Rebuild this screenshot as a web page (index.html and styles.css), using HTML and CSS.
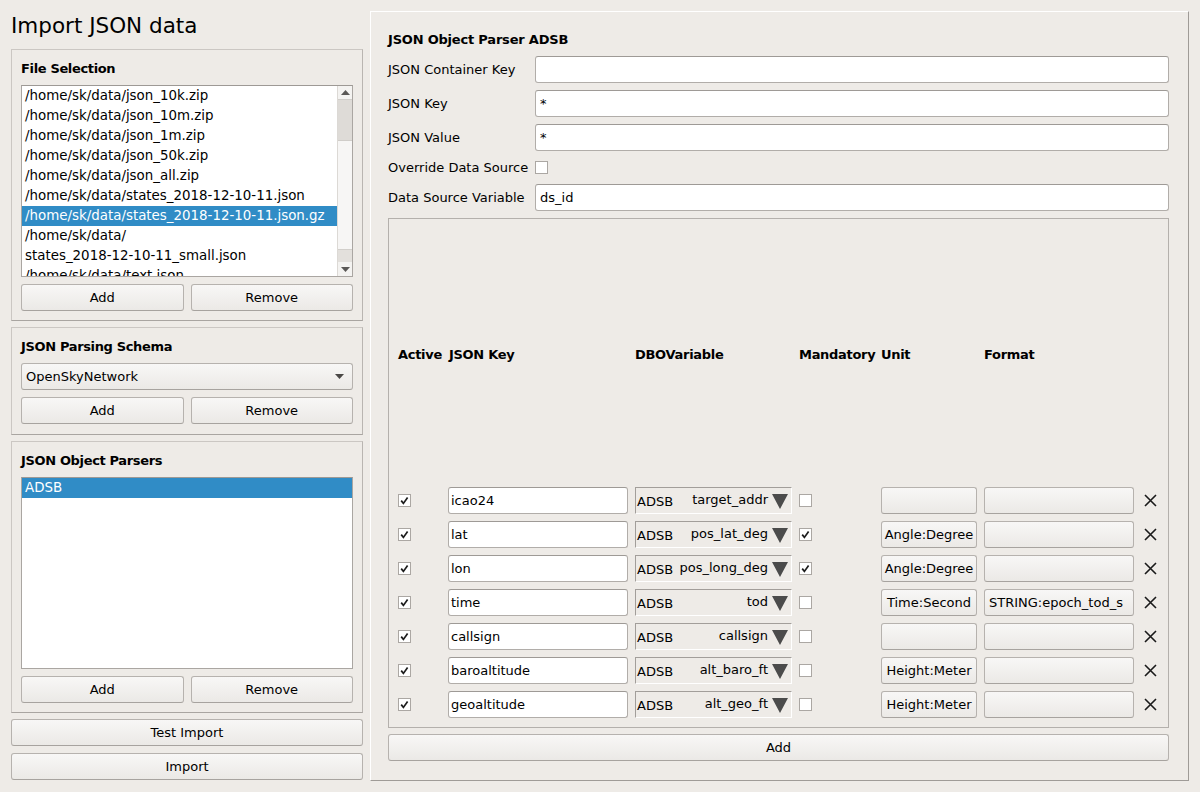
FILE: index.html
```html
<!DOCTYPE html>
<html>
<head>
<meta charset="utf-8">
<link rel="stylesheet" href="styles.css">
</head>
<body>
<div class="app">
  <div class="left">
    <div class="title">Import JSON data</div>

    <div class="group">
      <div class="gtitle">File Selection</div>
      <div class="list filelist">
        <div class="items">
          <div class="item">/home/sk/data/json_10k.zip</div>
          <div class="item">/home/sk/data/json_10m.zip</div>
          <div class="item">/home/sk/data/json_1m.zip</div>
          <div class="item">/home/sk/data/json_50k.zip</div>
          <div class="item">/home/sk/data/json_all.zip</div>
          <div class="item">/home/sk/data/states_2018-12-10-11.json</div>
          <div class="item sel">/home/sk/data/states_2018-12-10-11.json.gz</div>
          <div class="item">/home/sk/data/</div>
          <div class="item">states_2018-12-10-11_small.json</div>
          <div class="item">/home/sk/data/text.json</div>
        </div>
        <div class="vscroll">
          <div class="sbtn up"><svg width="9" height="5" viewBox="0 0 9 5"><path d="M0 5 L4.5 0 L9 5 Z" fill="#5a5856"/></svg></div>
          <div class="thumb"></div>
          <div class="track"></div>
          <div class="sband"></div>
          <div class="sbtn down"><svg width="9" height="5" viewBox="0 0 9 5"><path d="M0 0 L4.5 5 L9 0 Z" fill="#5a5856"/></svg></div>
        </div>
      </div>
      <div class="btnrow"><button class="btn">Add</button><button class="btn">Remove</button></div>
    </div>

    <div class="group g2">
      <div class="gtitle">JSON Parsing Schema</div>
      <div class="combo">
        <span>OpenSkyNetwork</span>
        <svg width="9" height="5" viewBox="0 0 9 5"><path d="M0 0 L4.5 5 L9 0 Z" fill="#4a4846"/></svg>
      </div>
      <div class="btnrow"><button class="btn">Add</button><button class="btn">Remove</button></div>
    </div>

    <div class="group grow">
      <div class="gtitle">JSON Object Parsers</div>
      <div class="list parserlist">
        <div class="items">
          <div class="item sel">ADSB</div>
        </div>
      </div>
      <div class="btnrow"><button class="btn">Add</button><button class="btn">Remove</button></div>
    </div>

    <button class="btn wide">Test Import</button>
    <button class="btn wide">Import</button>
  </div>

  <div class="right">
    <div class="ptitle">JSON Object Parser ADSB</div>
    <div class="form">
      <div class="lbl">JSON Container Key</div>
      <div class="input"></div>
      <div class="lbl">JSON Key</div>
      <div class="input">*</div>
      <div class="lbl">JSON Value</div>
      <div class="input">*</div>
      <div class="lbl">Override Data Source</div>
      <div class="cbcell"><span class="cb"></span></div>
      <div class="lbl">Data Source Variable</div>
      <div class="input">ds_id</div>
    </div>

    <div class="tframe">
      <div class="tgrid">
        <div class="th">Active</div>
        <div class="th">JSON Key</div>
        <div class="th">DBOVariable</div>
        <div class="th">Mandatory</div>
        <div class="th">Unit</div>
        <div class="th">Format</div>
        <div class="th"></div>

        <div class="cbcell"><span class="cb on"><svg width="11" height="11" viewBox="0 0 11 11"><path d="M2.2 5.6 L4.4 8.4 L8.6 2.4" fill="none" stroke="#1c1c1c" stroke-width="1.7"/></svg></span></div>
        <div class="input small">icao24</div>
        <div class="dbo"><span class="ds">ADSB</span><span class="var">target_addr</span><svg class="tri" width="16" height="15" viewBox="0 0 16 15"><path d="M0 0 L16 0 L8 15 Z" fill="#4b4b4b"/></svg></div>
        <div class="cbcell"><span class="cb"></span></div>
        <button class="btn unit"></button>
        <button class="btn fmt"></button>
        <div class="xcell"><svg width="13" height="13" viewBox="0 0 13 13"><path d="M1 1 L12 12 M12 1 L1 12" stroke="#1a1a1a" stroke-width="1.6"/></svg></div>

        <div class="cbcell"><span class="cb on"><svg width="11" height="11" viewBox="0 0 11 11"><path d="M2.2 5.6 L4.4 8.4 L8.6 2.4" fill="none" stroke="#1c1c1c" stroke-width="1.7"/></svg></span></div>
        <div class="input small">lat</div>
        <div class="dbo"><span class="ds">ADSB</span><span class="var">pos_lat_deg</span><svg class="tri" width="16" height="15" viewBox="0 0 16 15"><path d="M0 0 L16 0 L8 15 Z" fill="#4b4b4b"/></svg></div>
        <div class="cbcell"><span class="cb on"><svg width="11" height="11" viewBox="0 0 11 11"><path d="M2.2 5.6 L4.4 8.4 L8.6 2.4" fill="none" stroke="#1c1c1c" stroke-width="1.7"/></svg></span></div>
        <button class="btn unit">Angle:Degree</button>
        <button class="btn fmt"></button>
        <div class="xcell"><svg width="13" height="13" viewBox="0 0 13 13"><path d="M1 1 L12 12 M12 1 L1 12" stroke="#1a1a1a" stroke-width="1.6"/></svg></div>

        <div class="cbcell"><span class="cb on"><svg width="11" height="11" viewBox="0 0 11 11"><path d="M2.2 5.6 L4.4 8.4 L8.6 2.4" fill="none" stroke="#1c1c1c" stroke-width="1.7"/></svg></span></div>
        <div class="input small">lon</div>
        <div class="dbo"><span class="ds">ADSB</span><span class="var">pos_long_deg</span><svg class="tri" width="16" height="15" viewBox="0 0 16 15"><path d="M0 0 L16 0 L8 15 Z" fill="#4b4b4b"/></svg></div>
        <div class="cbcell"><span class="cb on"><svg width="11" height="11" viewBox="0 0 11 11"><path d="M2.2 5.6 L4.4 8.4 L8.6 2.4" fill="none" stroke="#1c1c1c" stroke-width="1.7"/></svg></span></div>
        <button class="btn unit">Angle:Degree</button>
        <button class="btn fmt"></button>
        <div class="xcell"><svg width="13" height="13" viewBox="0 0 13 13"><path d="M1 1 L12 12 M12 1 L1 12" stroke="#1a1a1a" stroke-width="1.6"/></svg></div>

        <div class="cbcell"><span class="cb on"><svg width="11" height="11" viewBox="0 0 11 11"><path d="M2.2 5.6 L4.4 8.4 L8.6 2.4" fill="none" stroke="#1c1c1c" stroke-width="1.7"/></svg></span></div>
        <div class="input small">time</div>
        <div class="dbo"><span class="ds">ADSB</span><span class="var">tod</span><svg class="tri" width="16" height="15" viewBox="0 0 16 15"><path d="M0 0 L16 0 L8 15 Z" fill="#4b4b4b"/></svg></div>
        <div class="cbcell"><span class="cb"></span></div>
        <button class="btn unit">Time:Second</button>
        <button class="btn fmt">STRING:epoch_tod_s</button>
        <div class="xcell"><svg width="13" height="13" viewBox="0 0 13 13"><path d="M1 1 L12 12 M12 1 L1 12" stroke="#1a1a1a" stroke-width="1.6"/></svg></div>

        <div class="cbcell"><span class="cb on"><svg width="11" height="11" viewBox="0 0 11 11"><path d="M2.2 5.6 L4.4 8.4 L8.6 2.4" fill="none" stroke="#1c1c1c" stroke-width="1.7"/></svg></span></div>
        <div class="input small">callsign</div>
        <div class="dbo"><span class="ds">ADSB</span><span class="var">callsign</span><svg class="tri" width="16" height="15" viewBox="0 0 16 15"><path d="M0 0 L16 0 L8 15 Z" fill="#4b4b4b"/></svg></div>
        <div class="cbcell"><span class="cb"></span></div>
        <button class="btn unit"></button>
        <button class="btn fmt"></button>
        <div class="xcell"><svg width="13" height="13" viewBox="0 0 13 13"><path d="M1 1 L12 12 M12 1 L1 12" stroke="#1a1a1a" stroke-width="1.6"/></svg></div>

        <div class="cbcell"><span class="cb on"><svg width="11" height="11" viewBox="0 0 11 11"><path d="M2.2 5.6 L4.4 8.4 L8.6 2.4" fill="none" stroke="#1c1c1c" stroke-width="1.7"/></svg></span></div>
        <div class="input small">baroaltitude</div>
        <div class="dbo"><span class="ds">ADSB</span><span class="var">alt_baro_ft</span><svg class="tri" width="16" height="15" viewBox="0 0 16 15"><path d="M0 0 L16 0 L8 15 Z" fill="#4b4b4b"/></svg></div>
        <div class="cbcell"><span class="cb"></span></div>
        <button class="btn unit">Height:Meter</button>
        <button class="btn fmt"></button>
        <div class="xcell"><svg width="13" height="13" viewBox="0 0 13 13"><path d="M1 1 L12 12 M12 1 L1 12" stroke="#1a1a1a" stroke-width="1.6"/></svg></div>

        <div class="cbcell"><span class="cb on"><svg width="11" height="11" viewBox="0 0 11 11"><path d="M2.2 5.6 L4.4 8.4 L8.6 2.4" fill="none" stroke="#1c1c1c" stroke-width="1.7"/></svg></span></div>
        <div class="input small">geoaltitude</div>
        <div class="dbo"><span class="ds">ADSB</span><span class="var">alt_geo_ft</span><svg class="tri" width="16" height="15" viewBox="0 0 16 15"><path d="M0 0 L16 0 L8 15 Z" fill="#4b4b4b"/></svg></div>
        <div class="cbcell"><span class="cb"></span></div>
        <button class="btn unit">Height:Meter</button>
        <button class="btn fmt"></button>
        <div class="xcell"><svg width="13" height="13" viewBox="0 0 13 13"><path d="M1 1 L12 12 M12 1 L1 12" stroke="#1a1a1a" stroke-width="1.6"/></svg></div>
      </div>
    </div>

    <button class="btn addrow">Add</button>
  </div>
</div>
</body>
</html>
```

FILE: styles.css
```css
* { box-sizing: border-box; }

html, body {
  margin: 0;
  padding: 0;
  width: 1200px;
  height: 792px;
  overflow: hidden;
  background: #eeebe7;
  font-family: "DejaVu Sans", "Liberation Sans", sans-serif;
  font-size: 13px;
  color: #000;
}

.app {
  display: flex;
  gap: 7px;
  padding: 11px 11px 11px 11px;
  height: 792px;
}

/* ---------- left column ---------- */
.left {
  width: 352px;
  flex: none;
  display: flex;
  flex-direction: column;
  padding-bottom: 1px;
}

.title {
  height: 38px;
  line-height: 30px;
  font-size: 21.5px;
}

.group {
  border: 1px solid #cbc7c3;
  border-bottom-color: #a9a5a1;
  border-right-color: #b9b5b1;
  padding: 9px 9px 9px 9px;
  display: flex;
  flex-direction: column;
  margin-bottom: 6px;
}

.group.g2 { padding-bottom: 10px; }

.group.grow { flex: 1; min-height: 0; }

.gtitle {
  height: 20px;
  line-height: 20px;
  font-weight: bold;
  letter-spacing: -0.35px;
  margin-bottom: 6px;
}

.list {
  background: #fff;
  border: 1px solid #aaa6a2;
  border-top-color: #9d9995;
  display: flex;
  overflow: hidden;
}

.filelist { height: 192px; }
.parserlist { flex: 1; min-height: 0; }

.items {
  flex: 1;
  overflow: hidden;
}

.item {
  height: 20px;
  line-height: 20px;
  padding-left: 3px;
  white-space: nowrap;
  font-size: 13.4px;
}

.item.sel {
  background: #308cc6;
  color: #fff;
}

.vscroll {
  width: 15px;
  flex: none;
  display: flex;
  flex-direction: column;
  border-left: 1px solid #dcd9d5;
  background: #f7f6f5;
}

.sbtn {
  height: 13px;
  display: flex;
  align-items: center;
  justify-content: center;
  background: #f4f3f1;
}

.sbtn.down { height: 14px; }

.thumb {
  height: 42px;
  background: #dedbd7;
  border-top: 1px solid #d0cdc9;
  border-bottom: 1px solid #d0cdc9;
}

.track { flex: 1; background: #f7f6f5; }

.sband {
  height: 13px;
  background: #e3e0dc;
  border-top: 1px solid #d2cfcb;
}

.btnrow {
  display: flex;
  gap: 7px;
  margin-top: 7px;
}

.btnrow .btn { flex: 1; }

.btn {
  height: 27px;
  font-family: "DejaVu Sans", "Liberation Sans", sans-serif;
  font-size: 13px;
  color: #000;
  background: linear-gradient(#f8f7f6, #ebe9e6);
  border: 1px solid #b6b2ae;
  border-bottom-color: #a7a39f;
  border-radius: 3px;
  padding: 0;
  margin: 0;
  white-space: nowrap;
  overflow: hidden;
}

.btn.wide {
  width: 352px;
  flex: none;
}

.btn.wide + .btn.wide { margin-top: 7px; }

.combo {
  height: 27px;
  display: flex;
  align-items: center;
  justify-content: space-between;
  padding: 0 8px 0 4px;
  background: linear-gradient(#f8f7f6, #ebe9e6);
  border: 1px solid #b6b2ae;
  border-bottom-color: #a7a39f;
  border-radius: 3px;
}

/* ---------- right panel ---------- */
.right {
  flex: 1;
  display: flex;
  flex-direction: column;
  border: 1px solid #9f9b97;
  border-top-color: #ffffff;
  border-left-color: #ffffff;
  padding: 18px 19px 19px 17px;
}

.ptitle {
  height: 20px;
  line-height: 20px;
  font-weight: bold;
  letter-spacing: -0.2px;
  margin-bottom: 6px;
}

.form {
  display: grid;
  grid-template-columns: 147px 1fr;
  grid-template-rows: 27px 27px 27px 19px 27px;
  row-gap: 7px;
}

.lbl {
  display: flex;
  align-items: center;
  white-space: nowrap;
}

.input {
  height: 27px;
  background: #fff;
  border: 1px solid #b1ada9;
  border-top-color: #9e9a96;
  border-radius: 3px;
  padding: 0 4px;
  display: flex;
  align-items: center;
  white-space: nowrap;
  overflow: hidden;
}

.input.small { padding-left: 2px; }

.cbcell {
  display: flex;
  align-items: center;
}

.cb {
  width: 13px;
  height: 13px;
  background: #fff;
  border: 1px solid #aba7a3;
  display: flex;
  align-items: center;
  justify-content: center;
}

.tframe {
  flex: 1;
  margin-top: 7px;
  border: 1px solid #b4b0ac;
  padding: 9px;
  display: flex;
  min-height: 0;
}

.tgrid {
  flex: 1;
  display: grid;
  grid-template-columns: 43px 180px 157px 75px 96px 150px 17px;
  grid-template-rows: 1fr repeat(7, 27px);
  column-gap: 7px;
  row-gap: 7px;
}

.th {
  align-self: center;
  font-weight: bold;
  letter-spacing: -0.3px;
  white-space: nowrap;
}

.th:nth-child(2) { padding-left: 1px; }

.dbo {
  height: 27px;
  display: flex;
  align-items: center;
  border: 1px solid #fff;
  border-top-color: #a29e9a;
  border-left-color: #a29e9a;
  padding: 0 3px 0 1px;
  white-space: nowrap;
  overflow: hidden;
}

.dbo .ds { padding-top: 1px; }

.dbo .var {
  flex: 1;
  text-align: right;
  padding-right: 4px;
  padding-bottom: 3px;
}

.dbo .tri { flex: none; margin-top: 1px; }

.btn.unit { text-align: center; }

.btn.fmt {
  text-align: left;
  padding-left: 4px;
}

.xcell {
  display: flex;
  align-items: center;
  justify-content: center;
  padding-left: 2px;
}

.btn.addrow {
  margin-top: 6px;
  width: 100%;
  flex: none;
}
```
